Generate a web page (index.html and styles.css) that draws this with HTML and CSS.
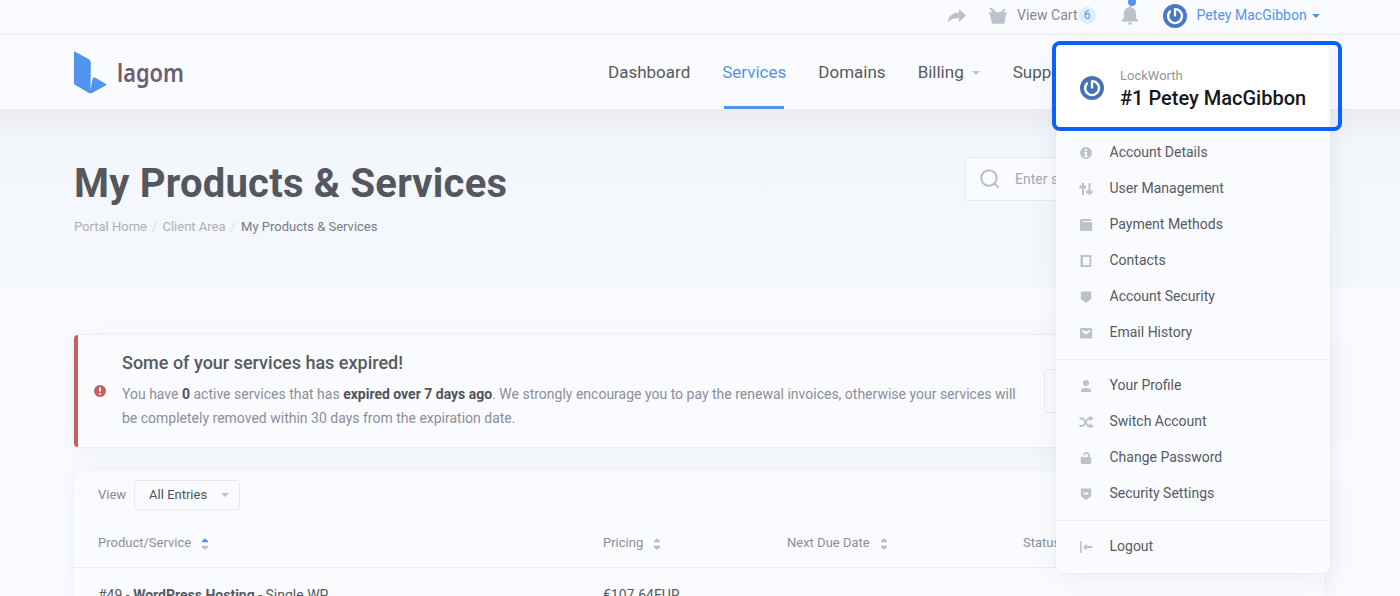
FILE: index.html
```
<!DOCTYPE html>
<html lang="en">
<head>
<meta charset="utf-8">
<title>My Products &amp; Services</title>
<link rel="stylesheet" href="styles.css">
</head>
<body>
<svg class="sprite" width="0" height="0">
  <symbol id="power" viewBox="0 0 24 24"><circle cx="12" cy="12" r="12" fill="currentColor"/><path d="M12 11.500V5.200a6.900 6.900 0 11-5 2.200" fill="none" stroke="#fff" stroke-width="2.300" stroke-linecap="round" stroke-linejoin="round"/></symbol>
  <symbol id="sort" viewBox="0 0 8 14"><path class="up" d="M1 5.2v-1.200L4 1.300l3 2.700v1.200z"/><path class="down" d="M.9 8.800h6.200v1.400L4 12.800.9 10.200z"/></symbol>
</svg>
<div class="topbar">
  <svg class="share" width="20" height="16" viewBox="0 0 20 16"><path d="M12 1l7 6.500-7 6.500v-3.700C7 10 3.500 11 1 14.500 1 8.500 5 4.800 12 4.600z"/></svg>
  <svg class="basket" width="20" height="17" viewBox="0 0 20 17"><path d="M1.300 1.300l1.800-.9 5.400 4.800h4l3.800-3.600 1.200 1.200-2.400 2.400h3.700v2.300h-.9L16.500 15.500q-.2 1.200-1.400 1.200H5q-1.200 0-1.400-1.200L2.100 7.500h-.9V5.200h3.600z"/></svg>
  <span class="cart">View Cart</span><span class="count">6</span>
  <span class="bell"><svg width="18" height="19" viewBox="0 0 18 19"><path d="M7.500 1.500a1.500 1.500 0 013 0C14 2.300 15 5 15 8v4l2.200 2.500v1H.8v-1L3 12V8c0-3 1-5.700 4.500-6.500zM6.800 16.500h4.400a2.200 2.200 0 01-4.400 0z"/></svg><i class="dot"></i></span>
  <svg class="avatar" width="24" height="24"><use href="#power"/></svg>
  <span class="user">Petey MacGibbon</span><i class="caret blue"></i>
</div>
<header class="header">
  <div class="logo">
    <svg width="33" height="43" viewBox="0 0 33 43"><path fill="#5294ec" d="M0 1.500Q0 .2 1.200.7L14.500 8q2.300 1.300 2.300 3.500L16.500 39l2-11q.4-2.600 2.800-1.300L32 33q1 .7 0 1.300L18 42q-1.500.8-3 0L1.200 34Q0 33.300 0 32z"/></svg>
    <span>lagom</span>
  </div>
  <nav class="nav"><a>Dashboard</a><a class="active">Services</a><a>Domains</a><a>Billing<i class="caret"></i></a><a>Support</a></nav>
</header>
<section class="banner">
  <div>
    <h1>My Products &amp; Services</h1>
    <p class="crumbs"><span>Portal Home</span><i>/</i><span>Client Area</span><i>/</i><b>My Products &amp; Services</b></p>
  </div>
  <div class="search"><svg width="22" height="22" viewBox="0 0 22 22"><circle cx="10" cy="10" r="7.700"/><path d="M15.500 15.500l4 4"/></svg><span>Enter search...</span></div>
</section>
<main class="content">
  <section class="alert">
    <svg width="12" height="12" viewBox="0 0 12 12"><circle cx="6" cy="6" r="6" fill="#c4615f"/><path d="M6 2.500v4M6 8v1.500" stroke="#fff" stroke-width="2"/></svg>
    <div class="message"><h2>Some of your services has expired!</h2>
    <p>You have <b>0</b> active services that has <b>expired over 7 days ago</b>. We strongly encourage you to pay the renewal invoices, otherwise your services will<br>be completely removed within 30 days from the expiration date.</p></div>
    <span class="button"></span>
  </section>
  <section class="card">
    <div class="filter"><span>View</span><div class="select"><span>All Entries</span><i class="caret"></i></div></div>
    <div class="grid head">
      <span>Product/Service<svg class="sorted" width="8" height="14"><use href="#sort"/></svg></span>
      <span>Pricing<svg width="8" height="14"><use href="#sort"/></svg></span>
      <span>Next Due Date<svg width="8" height="14"><use href="#sort"/></svg></span>
      <span>Status</span>
    </div>
    <div class="grid row"><span>#49 - <b>WordPress Hosting</b> - Single WP</span><span>€107.64EUR</span></div>
  </section>
</main>
<aside class="menu">
  <div class="account">
    <svg width="24" height="24"><use href="#power"/></svg>
    <div><small>LockWorth</small><strong>#1 Petey MacGibbon</strong></div>
  </div>
  <ul>
    <li><svg viewBox="0 0 14 14"><path fill-rule="evenodd" d="M7 1a6 6 0 100 12A6 6 0 007 1zM6 3h2v2H6zM5.500 6H8v4h1v1H5v-1h1V7h-.5z"/></svg>Account Details</li>
    <li><svg viewBox="0 0 14 14"><path d="M3 13V6.500H.5v-3H3V1h2v2.500h2v3H5V13zM9.500 1h2v7.500h2v3h-2V13h-2v-1.500H7v-3h2.500z"/></svg>User Management</li>
    <li><svg viewBox="0 0 14 14"><path d="M3 1h9v2H3.200v1H12q1.200 0 1.200 1.200v6.600Q13.200 13 12 13H2.500Q1 13 1 11.500V3q0-2 2-2z"/></svg>Payment Methods</li>
    <li><svg viewBox="0 0 14 14"><path fill-rule="evenodd" d="M1.500 1h10.800v12H1.500zM4 3v8h6.500V3z"/></svg>Contacts</li>
    <li><svg viewBox="0 0 14 14"><path d="M1.800 2.500q0-1 1-1h8.400q1 0 1 1V9L7 13 1.800 9z"/></svg>Account Security</li>
    <li><svg viewBox="0 0 14 14"><path fill-rule="evenodd" d="M2 2h10q1.200 0 1.200 1.200V11q0 1.500-1.200 1.500H2Q1 12.500 1 11V3.200Q1 2 2 2zM3 4v1.500l4 3.300 4-3.300V4L7 5.500z"/></svg>Email History</li>
  </ul>
  <ul>
    <li><svg viewBox="0 0 14 14"><circle cx="7" cy="4" r="3"/><path d="M2 13v-1.300Q2 9 7 9t5 2.700V13z"/></svg>Your Profile</li>
    <li><svg viewBox="0 0 14 14"><path class="line" d="M.5 3.500H3c3 0 4 7.500 7 7.500h1.500M.5 11H3c3 0 4-7.500 7-7.500h1.500"/><path d="M10.500.7l4.500 2.800-4.500 2.800zM10.500 8.200L15 11l-4.500 2.800z"/></svg>Switch Account</li>
    <li><svg viewBox="0 0 14 14"><path d="M2.500 6H9V4.300a1.600 1.600 0 00-3.200 0H4.200a3.200 3.200 0 016.500 0V6h.3q1.200 0 1.200 1.200v4.600Q12.200 13 11 13H3q-1.200 0-1.200-1.200V7Q1.800 6 2.500 6z"/></svg>Change Password</li>
    <li><svg viewBox="0 0 14 14"><path fill-rule="evenodd" d="M1.800 1.500h10.400V9L7 13.300 1.800 9zM4.500 5.500v2h5v-2z"/></svg>Security Settings</li>
  </ul>
  <ul>
    <li><svg viewBox="0 0 14 14"><path d="M1 1h1.500v12H1zM4 7l3.800-3.300V6h5.700v2H7.800v2.300z"/></svg>Logout</li>
  </ul>
</aside>
<div class="highlight"></div>
</body>
</html>
```
FILE: styles.css
```
* { box-sizing: border-box; }
html { overflow: hidden; }
body { margin: 0; width: 1400px; height: 596px; overflow: hidden; position: relative; background: #fafbff; font: 14px Roboto, sans-serif; color: #565a61; }
svg { flex: none; display: block; }
.sprite { position: absolute; }
h1, h2, p, ul { margin: 0; padding: 0; }
i { font-style: normal; }
.caret { display: inline-block; border: 4px solid transparent; border-top-color: #bdc1ca; border-bottom: 0; }
.caret.blue { border-top-color: #5294ec; }

.topbar { height: 35px; border-bottom: 1px solid #e9ecf1; display: flex; align-items: center; padding: 0 79px 3px 947px; fill: #bdc1cb; white-space: nowrap; color: #85878f; }
.basket { margin: 0 9px 0 21px; }
.cart { margin-right: 1px; letter-spacing: .05px; }
.cart, .user { transform: translateY(-1px); }
.count { width: 17px; height: 17px; border-radius: 50%; background: #d9effc; color: #5294ec; font-size: 12px; line-height: 17px; text-align: center; margin-right: 25px; }
.bell { position: relative; margin-right: 24px; }
.dot { position: absolute; left: 7px; top: -8px; width: 8px; height: 8px; border-radius: 50%; background: #5294ec; }
.avatar { color: #4779c7; margin-right: 10px; }
.user { color: #5294ec; margin-right: 5px; letter-spacing: .03px; }

.header { height: 74px; display: flex; justify-content: space-between; padding-left: 74px; }
.logo { display: flex; align-items: flex-start; padding-top: 16px; gap: 10px; font: 600 25px "Noto Sans", sans-serif; color: #6c6072; }
.logo span { line-height: 42px; transform: scaleX(.87); transform-origin: 0 50%; }
.nav { display: flex; gap: 32px; width: 792px; font-size: 17px; line-height: 74px; white-space: nowrap; }
.nav a { position: relative; }
.nav a:last-child { margin-left: 1px; }
.nav .active { color: #5294ec; }
.nav .active::after { content: ""; position: absolute; bottom: 0; left: 1.500px; width: 60px; height: 3px; background: #5294ec; }
.nav .caret { margin-left: 8px; vertical-align: 3px; }

.banner { height: 178px; background: linear-gradient(180deg, #ebecf1 0, #eeeff5 12px, #f3f6fb 32px, #f4f8fc 100%); padding: 48px 76px 0 74px; display: flex; justify-content: space-between; }
h1 { font-size: 40px; line-height: 52px; font-weight: 700; color: #54575e; letter-spacing: .21px; white-space: nowrap; padding-top: 1px; }
.crumbs { display: flex; font-size: 13px; line-height: 18px; margin-top: 8px; color: #adb0b6; }
.crumbs i { width: 15.500px; text-align: center; color: #dde0e5; }
.crumbs b { font-weight: 400; color: #777b86; }
.search { width: 359px; height: 44px; background: #fafbff; border: 1px solid #e9ecf1; border-radius: 3px; display: flex; align-items: center; gap: 14px; padding-left: 13px; color: #a5a8b1; }
.search svg { fill: none; stroke: #b8bdc9; stroke-width: 2; }

.content { width: 1250px; margin: 48px 0 0 74px; display: flex; flex-direction: column; gap: 24px; }
.alert { height: 112px; border-radius: 4px; border-left: 4px solid #c4615f; background: #fafbff; box-shadow: 0 0 0 1px #eceff4, 0 3px 26px #7090b01f; display: flex; align-items: center; padding-left: 16px; }
.message { margin: 0 28px 2px 16px; white-space: nowrap; }
h2 { font-size: 18px; font-weight: 500; line-height: 24px; margin-bottom: 7px; color: #565a61; }
.message p { line-height: 24px; color: #8b8e97; }
.message b { font-weight: 700; color: #505459; }
.button { width: 150px; height: 44px; border: 1px solid #e9ecf1; border-radius: 3px; }
.card { height: 125px; overflow: hidden; border-radius: 7px 7px 0 0; background: #fafbff; box-shadow: 0 0 0 1px #f1f3f7, 0 3px 26px #7090b01f; }
.filter { display: flex; align-items: center; gap: 8px; height: 48px; padding-left: 24px; font-size: 13px; color: #858892; }
.filter span { transform: translateY(-1px); }
.select { width: 106px; height: 30px; border: 1px solid #e7eaef; border-radius: 3px; display: flex; align-items: center; justify-content: space-between; padding: 0 10px 0 14px; color: #505459; }
.grid { display: grid; grid-template-columns: 505px 184px 236px 1fr; padding-left: 24px; }
.grid span { display: flex; align-items: center; white-space: pre; }
.head { height: 49px; padding-bottom: 1px; font-size: 13px; color: #8b8e97; border-bottom: 1px solid #e9ecf1; }
.head svg { margin: 2px 0 0 10px; }
.down { fill: #b8bdc9; }
.sorted { --up: #5294ec; }
.up { fill: var(--up, #b8bdc9); }
.row { height: 53px; }

.menu { position: absolute; left: 1056px; top: 45px; width: 274px; height: 528px; border-radius: 6px; background: #fafbff; box-shadow: 0 0 2px #50607018, 0 4px 28px #50607018; }
.account { height: 82px; border-radius: 6px 6px 0 0; background: #fff; display: flex; align-items: center; gap: 16px; padding: 4px 0 0 24px; color: #4673b6; }
.account div { display: flex; flex-direction: column; white-space: nowrap; padding-top: 2px; }
.account small { font-size: 13px; line-height: 18px; color: #92949b; }
.account strong { font-size: 20px; line-height: 27px; font-weight: 500; color: #16171c; }
.menu ul { list-style: none; padding: 7px 0 9px; }
.menu ul + ul { border-top: 1px solid #e9ecf1; }
.menu li { height: 36px; display: flex; align-items: center; padding-left: 22.500px; }
.menu li svg { width: 14px; height: 14px; margin: 2px 17px 0 0; fill: #bdc1cb; overflow: visible; }
.menu .line { fill: none; stroke: #bdc1cb; stroke-width: 1.800; }
.highlight { position: absolute; left: 1052px; top: 41px; width: 290px; height: 90px; border: 4px solid #0b5fff; border-radius: 8px; }
```
